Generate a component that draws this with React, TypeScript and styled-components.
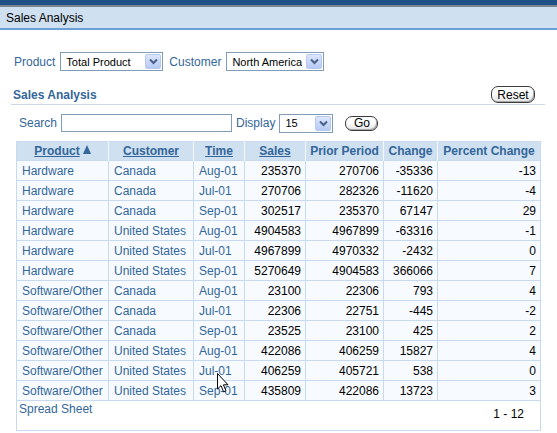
import React from "react";
import styled, {createGlobalStyle} from "styled-components";

const GlobalStyle = createGlobalStyle`
  html, body {
    margin: 0;
    padding: 0;
    background: #ffffff;
  }
  body {
    font-family: "Liberation Sans", Arial, sans-serif;
    font-size: 12px;
    color: #336699;
  }
`;

type Row = {
  product: string;
  customer: string;
  time: string;
  sales: number;
  prior: number;
  change: number;
  percent: number;
};

const rows: Row[] = [
  {product: "Hardware", customer: "Canada", time: "Aug-01", sales: 235370, prior: 270706, change: -35336, percent: -13},
  {product: "Hardware", customer: "Canada", time: "Jul-01", sales: 270706, prior: 282326, change: -11620, percent: -4},
  {product: "Hardware", customer: "Canada", time: "Sep-01", sales: 302517, prior: 235370, change: 67147, percent: 29},
  {product: "Hardware", customer: "United States", time: "Aug-01", sales: 4904583, prior: 4967899, change: -63316, percent: -1},
  {product: "Hardware", customer: "United States", time: "Jul-01", sales: 4967899, prior: 4970332, change: -2432, percent: 0},
  {product: "Hardware", customer: "United States", time: "Sep-01", sales: 5270649, prior: 4904583, change: 366066, percent: 7},
  {product: "Software/Other", customer: "Canada", time: "Aug-01", sales: 23100, prior: 22306, change: 793, percent: 4},
  {product: "Software/Other", customer: "Canada", time: "Jul-01", sales: 22306, prior: 22751, change: -445, percent: -2},
  {product: "Software/Other", customer: "Canada", time: "Sep-01", sales: 23525, prior: 23100, change: 425, percent: 2},
  {product: "Software/Other", customer: "United States", time: "Aug-01", sales: 422086, prior: 406259, change: 15827, percent: 4},
  {product: "Software/Other", customer: "United States", time: "Jul-01", sales: 406259, prior: 405721, change: 538, percent: 0},
  {product: "Software/Other", customer: "United States", time: "Sep-01", sales: 435809, prior: 422086, change: 13723, percent: 3},
];

const columns = [
  {label: "Product", width: 92, link: true, sorted: true},
  {label: "Customer", width: 85, link: true},
  {label: "Time", width: 51, link: true},
  {label: "Sales", width: 61, link: true},
  {label: "Prior Period", width: 78},
  {label: "Change", width: 54},
  {label: "Percent Change", width: 103},
];

export default function App() {
  return (
    <Page>
      <GlobalStyle/>
      <TitleBar>
        <TitleText>Sales Analysis</TitleText>
      </TitleBar>

      <FilterRow>
        <Label>Product</Label>
        <Select value="Total Product" width={103}/>
        <Label>Customer</Label>
        <Select value="North America" width={98}/>
      </FilterRow>

      <SectionHeader>
        <Heading>Sales Analysis</Heading>
        <PillButton $w={44} $h={17}>Reset</PillButton>
      </SectionHeader>

      <SearchRow>
        <Label>Search</Label>
        <TextInput/>
        <Label>Display</Label>
        <Select value="15" width={54}/>
        <PillButton $w={33} $h={15} $ml={7}>Go</PillButton>
      </SearchRow>

      <TableWrap>
        <Table>
          <colgroup>
            {columns.map(c => <col key={c.label} style={{width: c.width}}/>)}
          </colgroup>
          <thead>
            <tr>
              {columns.map(c => (
                <Th key={c.label} $link={!!c.link}>
                  {c.label}
                  {c.sorted && <SortArrow viewBox="0 0 8 9"><path d="M4 0 L8 9 L0 9 Z"/></SortArrow>}
                </Th>
              ))}
            </tr>
          </thead>
          <tbody>
            {rows.map((r, i) => (
              <tr key={i}>
                <Td>{r.product}</Td>
                <Td>{r.customer}</Td>
                <Td>{r.time}</Td>
                <NumTd>{r.sales}</NumTd>
                <NumTd>{r.prior}</NumTd>
                <NumTd>{r.change}</NumTd>
                <NumTd>{r.percent}</NumTd>
              </tr>
            ))}
            <tr>
              <FooterTd colSpan={7}>
                <Footer>
                  <span>Spread Sheet</span>
                  <RangeText>1 - 12</RangeText>
                </Footer>
              </FooterTd>
            </tr>
          </tbody>
        </Table>
        <Cursor viewBox="0 0 12 20">
          <path d="M0.5 0.5 L0.5 16 L4 12.6 L6.6 18.8 L9 17.8 L6.4 11.8 L11 11.8 Z"
                fill="#ffffff" stroke="#000000" strokeWidth="1" strokeLinejoin="miter"/>
        </Cursor>
      </TableWrap>
    </Page>
  );
}

const Select: React.FC<{value: string; width: number}> = ({value, width}) => (
  <SelectBox style={{width}}>
    <SelectValue>{value}</SelectValue>
    <ArrowButton>
      <svg width="9" height="7" viewBox="0 0 9 7">
        <path d="M1 1.5 L4.5 5 L8 1.5" fill="none" stroke="#4a5f8a" strokeWidth="2"/>
      </svg>
    </ArrowButton>
  </SelectBox>
);

const Page = styled.div`
  width: 557px;
  height: 433px;
  overflow: hidden;
`;

const TitleBar = styled.div`
  height: 21px;
  border-top: 5px solid #1f4f87;
  box-shadow: inset 0 2px 0 #7d8590;
  background: #cfe0f0;
  border-bottom: 2px solid #6a9fd8;
  display: flex;
  align-items: center;
  padding: 2px 0 0 6px;
`;

const TitleText = styled.span`
  color: #000000;
  font-size: 12px;
`;

const FilterRow = styled.div`
  display: flex;
  align-items: center;
  gap: 5px;
  margin: 22px 0 0 14px;
  height: 19px;
`;

const Label = styled.span`
  color: #336699;
  font-size: 12px;
`;

const SelectBox = styled.div`
  box-sizing: border-box;
  height: 19px;
  border: 1px solid #7f9db9;
  background: #ffffff;
  display: flex;
  align-items: center;
  justify-content: space-between;
  padding: 0 1px 0 5px;
  margin-right: 1px;
  flex-shrink: 0;
`;

const SelectValue = styled.span`
  color: #000000;
  font-size: 11px;
  white-space: nowrap;
`;

const ArrowButton = styled.div`
  box-sizing: border-box;
  width: 16px;
  height: 15px;
  border: 1px solid #b7c9f1;
  border-radius: 2px;
  background: linear-gradient(#dce6fc, #b6caf4);
  display: flex;
  align-items: center;
  justify-content: center;
`;

const SectionHeader = styled.div`
  display: flex;
  align-items: center;
  justify-content: space-between;
  margin: 15px 12px 0 11px;
  padding: 0 10px 1px 2px;
  height: 17px;
  border-bottom: 1px solid #cdd9e5;
`;

const Heading = styled.span`
  font-weight: bold;
  font-size: 12px;
  color: #336699;
`;

const PillButton = styled.div<{$w: number; $h: number; $ml?: number}>`
  box-sizing: border-box;
  width: ${p => p.$w}px;
  height: ${p => p.$h}px;
  margin-left: ${p => p.$ml ?? 0}px;
  border: 1px solid #3c3c3c;
  border-radius: 7px;
  background: linear-gradient(#ffffff 40%, #e2e2e2);
  color: #000000;
  font-size: 12px;
  display: flex;
  align-items: center;
  justify-content: center;
  box-shadow: inset -1px -1px 0 #a9a9a9;
`;

const SearchRow = styled.div`
  display: flex;
  align-items: center;
  gap: 4px;
  margin: 8px 0 0 19px;
  height: 20px;
`;

const TextInput = styled.div`
  box-sizing: border-box;
  width: 171px;
  height: 18px;
  border: 1px solid #7f9db9;
  background: #ffffff;
`;

const TableWrap = styled.div`
  position: relative;
  margin: 8px 0 0 16px;
  width: 525px;
`;

const Table = styled.table`
  border-collapse: collapse;
  table-layout: fixed;
  width: 525px;
  border: 1px solid #c8daf0;
`;

const Th = styled.th<{$link: boolean}>`
  height: 18px;
  padding: 0;
  background: #cfe0f1;
  border-left: 1px solid #f4f8fc;
  color: #336699;
  font-weight: bold;
  font-size: 12px;
  text-align: center;
  white-space: nowrap;
  text-decoration: ${p => (p.$link ? "underline" : "none")};
  &:first-child {
    border-left: 1px solid #c8daf0;
  }
`;

const SortArrow = styled.svg`
  width: 8px;
  height: 9px;
  margin-left: 3px;
  vertical-align: 1px;
  fill: #336699;
`;

const Td = styled.td`
  height: 19px;
  padding: 0 0 0 5px;
  background: #f7fbff;
  border: 1px solid #c8daf0;
  color: #336699;
  font-size: 12px;
  white-space: nowrap;
  overflow: hidden;
`;

const NumTd = styled(Td)`
  padding: 0 4px 0 0;
  text-align: right;
  color: #000000;
`;

const FooterTd = styled.td`
  padding: 0;
  border: 1px solid #c8daf0;
  background: #ffffff;
`;

const Footer = styled.div`
  height: 29px;
  display: flex;
  justify-content: space-between;
  align-items: flex-start;
  padding: 1px 16px 0 2px;
  box-sizing: border-box;
  color: #336699;
`;

const RangeText = styled.span`
  margin-top: 5px;
  color: #000000;
  font-size: 12px;
`;

const Cursor = styled.svg`
  position: absolute;
  left: 201px;
  top: 232px;
  width: 12px;
  height: 20px;
`;
